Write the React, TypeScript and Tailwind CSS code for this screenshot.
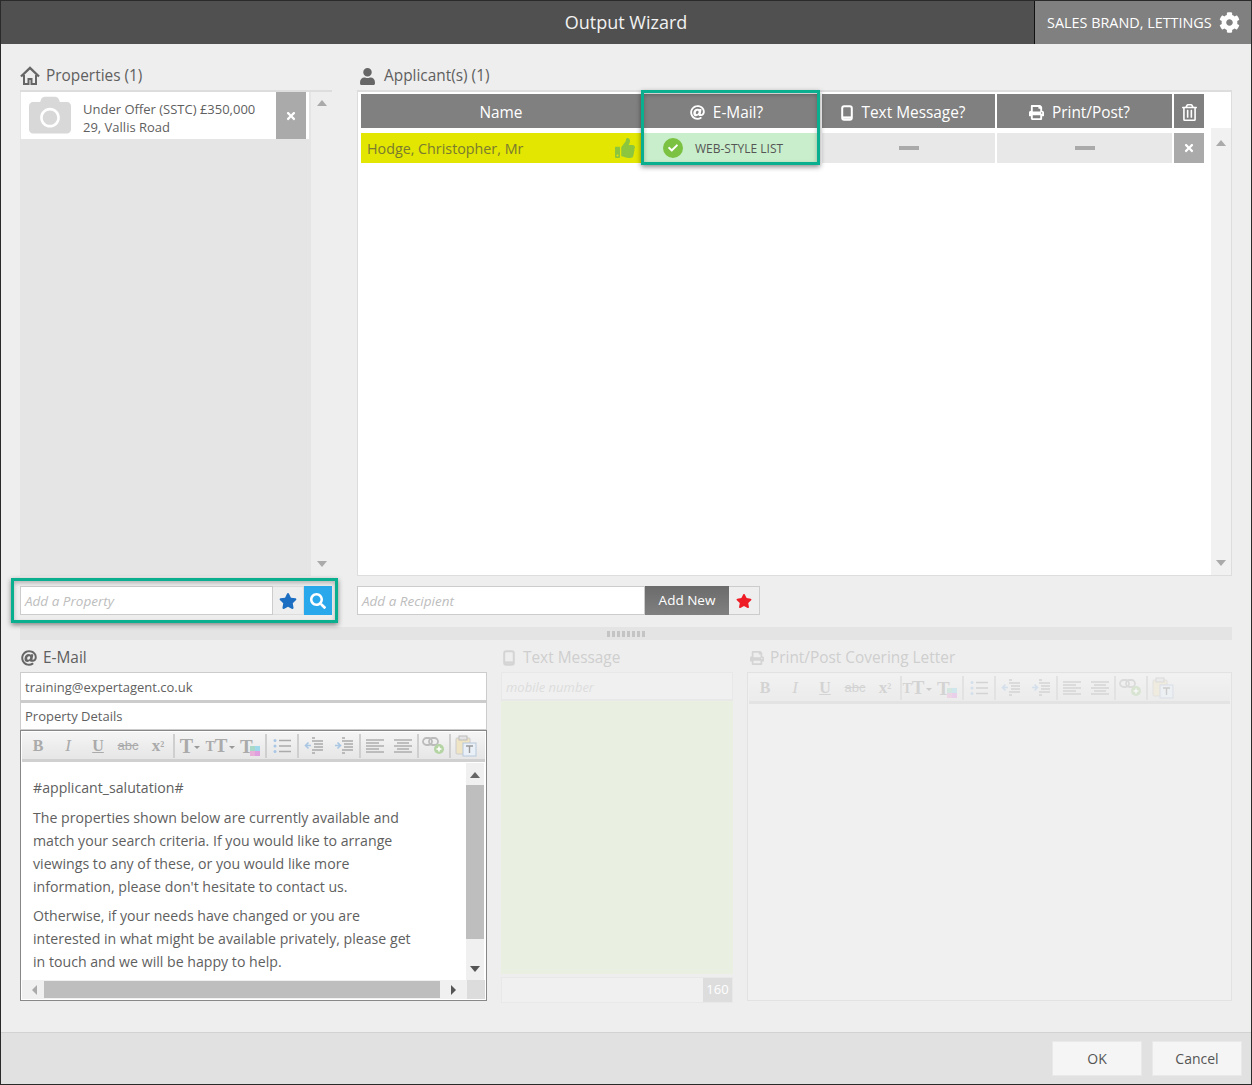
import type { ReactNode } from "react";
import {
  FaAt,
  FaCamera,
  FaCheck,
  FaCog,
  FaPrint,
  FaRegTrashAlt,
  FaSearch,
  FaStar,
  FaThumbsUp,
  FaTimes,
  FaUser,
} from "react-icons/fa";

const font = "font-['Open_Sans','Noto_Sans',sans-serif]";

function HomeIcon() {
  return (
    <svg width="20" height="20" viewBox="0 0 20 20" fill="none" stroke="#666" strokeWidth="2.4">
      <path d="M1 10.5 10 2l9 8.5" />
      <path d="M4 9v9h4.5v-5h3v5H16V9" strokeWidth="2" />
    </svg>
  );
}

function MobileIcon({ className }: { className?: string }) {
  return (
    <svg width="12" height="16" viewBox="0 0 12 16" className={className} fill="none" stroke="currentColor" strokeWidth="2">
      <rect x="1.2" y="1.2" width="9.6" height="13.6" rx="2" />
      <path d="M1 12.6h10" strokeWidth="2.4" />
    </svg>
  );
}

function TriUp({ dark }: { dark?: boolean }) {
  return <div className={`h-0 w-0 border-x-[5px] border-b-[6px] border-x-transparent ${dark ? "border-b-[#666]" : "border-b-[#aaa]"}`} />;
}

function TriDown({ dark }: { dark?: boolean }) {
  return <div className={`h-0 w-0 border-x-[5px] border-t-[6px] border-x-transparent ${dark ? "border-t-[#555]" : "border-t-[#aaa]"}`} />;
}

function Lines({ kind }: { kind: "list" | "left" | "center" | "out" | "in" }) {
  const arrow = "#a9c6e4";
  if (kind === "list") {
    return (
      <svg width="18" height="16" viewBox="0 0 18 16" stroke="#aaa" strokeWidth="1.4">
        <path d="M6 2.5h12M6 8h12M6 13.5h12" />
        <circle cx="2" cy="2.5" r="1.5" fill={arrow} stroke="none" />
        <circle cx="2" cy="8" r="1.5" fill={arrow} stroke="none" />
        <circle cx="2" cy="13.5" r="1.5" fill={arrow} stroke="none" />
      </svg>
    );
  }
  if (kind === "left" || kind === "center") {
    const c = kind === "center";
    return (
      <svg width="18" height="14" viewBox="0 0 18 14" stroke="#aaa" strokeWidth="1.4">
        <path d="M0 1h18" />
        <path d={c ? "M3 4h12" : "M0 4h13"} />
        <path d="M0 7h18" />
        <path d={c ? "M3 10h12" : "M0 10h13"} />
        <path d="M0 13h18" />
      </svg>
    );
  }
  return (
    <svg width="20" height="18" viewBox="0 0 20 18" stroke="#aaa" strokeWidth="1.4">
      <path d="M8 1h3M8 4h11M10 7h9M10 10h9M8 13h11M8 16h3" />
      {kind === "out" ? (
        <path d="M7 8.5H2M4.5 5.5l-3 3 3 3" stroke={arrow} fill="none" strokeWidth="1.6" />
      ) : (
        <path d="M1 8.5h5M3.5 5.5l3 3-3 3" stroke={arrow} fill="none" strokeWidth="1.6" />
      )}
    </svg>
  );
}

function LinkIcon() {
  return (
    <svg width="24" height="20" viewBox="0 0 24 20" fill="none">
      <rect x="1" y="2" width="9" height="7" rx="3.5" stroke="#bbb" strokeWidth="1.8" />
      <rect x="7" y="2" width="9" height="7" rx="3.5" stroke="#bbb" strokeWidth="1.8" />
      <circle cx="17" cy="13" r="5" fill="#b5d4a4" />
      <path d="M14.5 13h5M17 10.5v5" stroke="#fff" strokeWidth="1.5" />
    </svg>
  );
}

function PasteIcon() {
  return (
    <svg width="22" height="22" viewBox="0 0 22 22">
      <rect x="1" y="3" width="14" height="16" rx="1" fill="#efe5c4" stroke="#ccc" />
      <rect x="4" y="1" width="8" height="4" fill="#e4e4e4" stroke="#bbb" />
      <rect x="8" y="8" width="13" height="13" fill="#e9f0f8" stroke="#b7c8da" />
      <path d="M11 11h7M14.5 11v7" stroke="#999" strokeWidth="1.4" />
    </svg>
  );
}

function ColorT() {
  return (
    <span className="relative block h-5 w-5">
      <span className="font-['Liberation_Serif',serif] text-[19px] leading-5 font-bold text-[#aaa]">T</span>
      <span className="absolute right-0 bottom-0 grid h-[10px] w-[10px] grid-cols-2">
        <i className="bg-[#a8d8c8]" />
        <i className="bg-[#9fd8e8]" />
        <i className="bg-[#e8b0d8]" />
        <i className="bg-[#e0a0e0]" />
      </span>
    </span>
  );
}

function Sep() {
  return <div className="my-[1px] w-[2px] shrink-0 bg-[#cfcfcf]" />;
}

function Btn({ children, narrow }: { children: ReactNode; narrow?: boolean }) {
  return (
    <div className={`flex shrink-0 items-center justify-center font-['Liberation_Serif',serif] text-[#aaa] ${narrow ? "w-[28px]" : "w-[30px]"}`}>
      {children}
    </div>
  );
}

function Caret() {
  return <span className="mt-[3px] ml-[1px] h-0 w-0 border-x-[3px] border-t-[3px] border-x-transparent border-t-[#999]" />;
}

function Toolbar({ full }: { full?: boolean }) {
  return (
    <div className="flex h-[30px] border-b-[3px] border-[#d0d0d0] bg-gradient-to-b from-[#f5f5f5] to-[#e6e6e6] pt-[1px] pl-[1px]">
      <Btn><b className="text-[16px]">B</b></Btn>
      <Btn><i className="text-[17px]">I</i></Btn>
      <Btn><u className="text-[16px] font-bold">U</u></Btn>
      <Btn><s className="font-['Liberation_Sans',sans-serif] text-[13px]">abc</s></Btn>
      <Btn><span className="text-[17px] font-bold">x<sup className="text-[8px]">2</sup></span></Btn>
      <Sep />
      {full && (
        <Btn><span className="flex items-center text-[20px] font-bold">T<Caret /></span></Btn>
      )}
      <Btn><span className="flex items-center text-[19px] font-bold"><span className="text-[14px]">T</span>T<Caret /></span></Btn>
      <Btn><ColorT /></Btn>
      <Sep />
      <Btn><Lines kind="list" /></Btn>
      <Sep />
      <Btn><Lines kind="out" /></Btn>
      <Btn><Lines kind="in" /></Btn>
      <Sep />
      <Btn narrow><Lines kind="left" /></Btn>
      <Btn narrow><Lines kind="center" /></Btn>
      <Sep />
      <Btn><LinkIcon /></Btn>
      <Sep />
      <Btn><PasteIcon /></Btn>
    </div>
  );
}

function SectionTitle({ icon, children, muted, gap }: { icon: ReactNode; children: ReactNode; muted?: boolean; gap?: string }) {
  return (
    <div className={`flex h-[27px] items-center pb-[1px] text-[15.4px] ${gap ?? "gap-[6px]"} ${muted ? "text-[#cfcfcf]" : "text-[#5f5f5f]"}`}>
      {icon}
      <span>{children}</span>
    </div>
  );
}

function HeadCell({ className, icon, label }: { className: string; icon?: ReactNode; label?: string }) {
  return (
    <div className={`flex h-[34px] shrink-0 items-center justify-center gap-2 bg-[#808080] pt-[3px] text-[15.4px] text-white ${className}`}>
      {icon}
      {label && <span>{label}</span>}
    </div>
  );
}

function DashCell({ className }: { className: string }) {
  return (
    <div className={`flex h-[30px] shrink-0 items-center justify-center bg-[#e8e8e8] ${className}`}>
      <div className="h-[4px] w-5 bg-[#aaa]" />
    </div>
  );
}

export default function App() {
  return (
    <div className={`relative flex h-[1085px] w-[1252px] flex-col border border-[#2a2a2a] bg-[#eeeeee] ${font}`}>
      <header className="flex h-[43px] shrink-0 bg-[#505050] text-white">
        <div className="flex flex-1 items-center justify-center pl-[217px] text-[18px] text-[#f2f2f2]">Output Wizard</div>
        <div className="flex w-[217px] items-center gap-[7px] border-l border-[#111] bg-[#808080] pl-3 text-[14.4px]">
          <span className="whitespace-nowrap">SALES BRAND, LETTINGS</span>
          <FaCog size={21} />
        </div>
      </header>

      <div className="flex flex-1 flex-col">
        <div className="flex gap-[25px] pt-[19px] pl-[19px]">
          <section className="w-[312px]">
            <SectionTitle icon={<HomeIcon />}>Properties (1)</SectionTitle>
            <div className="flex h-[486px] border-t-2 border-[#dddddd]">
              <div className="w-[291px] bg-[#e5e5e5]">
                <div className="mr-[2px] ml-[1px] flex h-[47px] bg-white pr-[3px]">
                  <FaCamera size={42} className="mt-[2px] ml-[8px] text-[#d8d8d8]" />
                  <div className="ml-[12px] flex-1 pt-[8px] text-[13px] leading-[18px] text-[#5f5f5f]">
                    <div>Under Offer (SSTC) £350,000</div>
                    <div>29, Vallis Road</div>
                  </div>
                  <div className="flex w-[30px] items-center justify-center bg-[#aaaaaa] text-white"><FaTimes size={12} /></div>
                </div>
              </div>
              <div className="flex flex-1 flex-col items-center justify-between pt-[8px] pb-[9px]">
                <TriUp />
                <TriDown />
              </div>
            </div>
            <div className="mt-[10px] flex h-[29px]">
              <div className="flex w-[253px] items-center border border-[#cccccc] bg-white pt-[2px] pl-1 text-[13.5px] text-[#bdbdbd] italic">Add a Property</div>
              <div className="flex w-[31px] items-center justify-center border-y border-r border-[#dddddd] bg-[#eeeeee] text-[#1b6ec2]"><FaStar size={18} /></div>
              <div className="flex w-[28px] items-center justify-center bg-[#29a9ec] text-white"><FaSearch size={16} /></div>
            </div>
          </section>

          <section className="w-[875px]">
            <SectionTitle icon={<FaUser size={17} className="mr-[2px] ml-[2px] text-[#666]" />}>Applicant(s) (1)</SectionTitle>
            <div className="flex h-[486px] flex-col border border-t-2 border-[#dddddd] bg-white pt-[2px] pl-[2px]">
              <div className="ml-[1px] flex gap-[2px]">
                <HeadCell className="w-[280px]" label="Name" />
                <HeadCell className="w-[177px] pr-[10px]" icon={<FaAt size={15} />} label="E-Mail?" />
                <HeadCell className="w-[173px] pr-[10px]" icon={<MobileIcon />} label="Text Message?" />
                <HeadCell className="w-[175px] pr-[10px]" icon={<FaPrint size={15} />} label="Print/Post?" />
                <HeadCell className="w-[30px]" icon={<FaRegTrashAlt size={17} />} />
              </div>
              <div className="flex flex-1">
                <div className="ml-[1px] flex-1">
                  <div className="mt-[5px] flex gap-[2px]">
                    <div className="flex h-[30px] w-[280px] shrink-0 items-center justify-between bg-[#e2e600] pr-[6px] pl-[6px] text-[14.3px] text-[#7a7a30]">
                      <span className="pt-[1px]">Hodge, Christopher, Mr</span>
                      <FaThumbsUp size={20} className="text-[#8cc63f]" />
                    </div>
                    <div className="flex h-[30px] w-[177px] shrink-0 items-center gap-[12px] bg-[#c9eecb] pl-[20px] text-[12px] text-[#555]">
                      <span className="flex h-5 w-5 items-center justify-center rounded-full bg-[#7cc242] text-white"><FaCheck size={10} /></span>
                      <span className="pt-[1px]">WEB-STYLE LIST</span>
                    </div>
                    <DashCell className="w-[173px]" />
                    <DashCell className="w-[175px]" />
                    <div className="flex h-[30px] w-[30px] shrink-0 items-center justify-center bg-[#aaaaaa] text-white"><FaTimes size={12} /></div>
                  </div>
                </div>
                <div className="flex w-[20px] shrink-0 flex-col items-center justify-between bg-[#f1f1f1] pt-[12px] pb-[9px]">
                  <TriUp />
                  <TriDown />
                </div>
              </div>
            </div>
            <div className="mt-[10px] flex h-[29px]">
              <div className="flex w-[288px] items-center border border-[#cccccc] bg-white pt-[2px] pl-1 text-[13.5px] text-[#bdbdbd] italic">Add a Recipient</div>
              <div className="flex w-[84px] items-center justify-center bg-gradient-to-b from-[#6b6b6b] to-[#808080] text-[13.5px] text-white">Add New</div>
              <div className="flex w-[31px] items-center justify-center border-y border-r border-[#cccccc] bg-[#eeeeee] text-[#ee1c25]"><FaStar size={16} /></div>
            </div>
          </section>
        </div>

        <div className="mt-[12px] ml-[19px] flex h-[13px] w-[1212px] items-center justify-center bg-[#e4e4e4] pl-[1px]">
          <div className="h-[6px] w-[39px] bg-[repeating-linear-gradient(90deg,#c4c4c4_0,#c4c4c4_3px,transparent_3px,transparent_5px)]" />
        </div>

        <div className="flex gap-[14px] pt-[5px] pl-[19px]">
          <section className="w-[467px]">
            <SectionTitle icon={<FaAt size={16} className="ml-[1px] text-[#666]" />}>E-Mail</SectionTitle>
            <div className="flex h-[29px] items-center border border-[#cccccc] bg-white pt-[3px] pl-1 text-[13px] text-[#5f5f5f]">training@expertagent.co.uk</div>
            <div className="flex h-[29px] items-center border border-t-2 border-[#cccccc] bg-white pt-[2px] pl-1 text-[13px] text-[#5f5f5f]">Property Details</div>
            <div className="flex h-[271px] flex-col border border-[#888888] bg-white p-[1px]">
              <Toolbar full />
              <div className="flex min-h-0 flex-1 pt-[1px]">
                <div className="flex-1 pt-[13px] pl-[11px] text-[14.15px] leading-[23px] text-[#5f5f5f]">
                  <p>#applicant_salutation#</p>
                  <p className="mt-[7px]">
                    The properties shown below are currently available and<br />
                    match your search criteria. If you would like to arrange<br />
                    viewings to any of these, or you would like more<br />
                    information, please don't hesitate to contact us.
                  </p>
                  <p className="mt-[6px]">
                    Otherwise, if your needs have changed or you are<br />
                    interested in what might be available privately, please get<br />
                    in touch and we will be happy to help.
                  </p>
                </div>
                <div className="mr-[1px] flex w-[18px] flex-col items-center bg-[#f0f0f0] pt-[9px] pb-[8px]">
                  <TriUp dark />
                  <div className="mt-[7px] h-[154px] w-full bg-[#bebebe]" />
                  <div className="mt-auto">
                    <TriDown dark />
                  </div>
                </div>
              </div>
              <div className="flex h-[19px] bg-[#f0f0f0]">
                <div className="flex flex-1 items-center pl-[10px]">
                  <div className="h-0 w-0 border-y-[5px] border-r-[5px] border-y-transparent border-r-[#aaa]" />
                  <div className="ml-[7px] h-[17px] w-[396px] bg-[#bebebe]" />
                  <div className="ml-[11px] h-0 w-0 border-y-[5px] border-l-[5px] border-y-transparent border-l-[#555]" />
                </div>
                <div className="w-[18px] bg-[#dcdcdc]" />
              </div>
            </div>
          </section>

          <section className="w-[232px]">
            <SectionTitle muted gap="gap-[8px]" icon={<MobileIcon className="ml-[2px] text-[#d4d4d4]" />}>Text Message</SectionTitle>
            <div className="flex h-[29px] items-center border border-b-2 border-[#e8e8e8] bg-[#f0f0f0] pt-[3px] pl-1 text-[13px] text-[#dddddd] italic">mobile number</div>
            <div className="h-[273px] bg-[#e9f0e2]" />
            <div className="mt-[3px] flex h-[26px] justify-end border border-[#e8e8e8] bg-[#f0f0f0]">
              <div className="flex w-[29px] items-center justify-center bg-[#dddddd] text-[13px] text-white">160</div>
            </div>
          </section>

          <section className="w-[486px] pr-[1px]">
            <SectionTitle muted icon={<FaPrint size={14} className="ml-[3px] text-[#d4d4d4]" />}>Print/Post Covering Letter</SectionTitle>
            <div className="h-[329px] border border-[#e2e2e2] bg-[#f0f0f0] p-[1px]">
              <div className="opacity-40">
                <Toolbar />
              </div>
            </div>
          </section>
        </div>
      </div>

      <footer className="flex h-[52px] shrink-0 items-start justify-end gap-[10px] border-t border-[#d2d2d2] bg-[#e1e1e1] pt-[8px] pr-[9px]">
        <div className="flex h-[35px] w-[90px] items-center justify-center border border-[#e9e9e9] bg-[#f5f5f5] text-[14px] text-[#555]">OK</div>
        <div className="flex h-[35px] w-[90px] items-center justify-center border border-[#e9e9e9] bg-[#f5f5f5] text-[14px] text-[#555]">Cancel</div>
      </footer>

      {/* teal callouts sit over the form */}
      <div className="absolute top-[89px] left-[640px] h-[75px] w-[179px] border-[3px] border-[#0aaf8f] shadow-[0_2px_5px_rgba(0,0,0,0.45),inset_0_2px_4px_rgba(0,0,0,0.25)]" />
      <div className="absolute top-[577px] left-[10px] h-[45px] w-[327px] border-[3px] border-[#0aaf8f] shadow-[0_2px_5px_rgba(0,0,0,0.45),inset_0_2px_4px_rgba(0,0,0,0.25)]" />
    </div>
  );
}
